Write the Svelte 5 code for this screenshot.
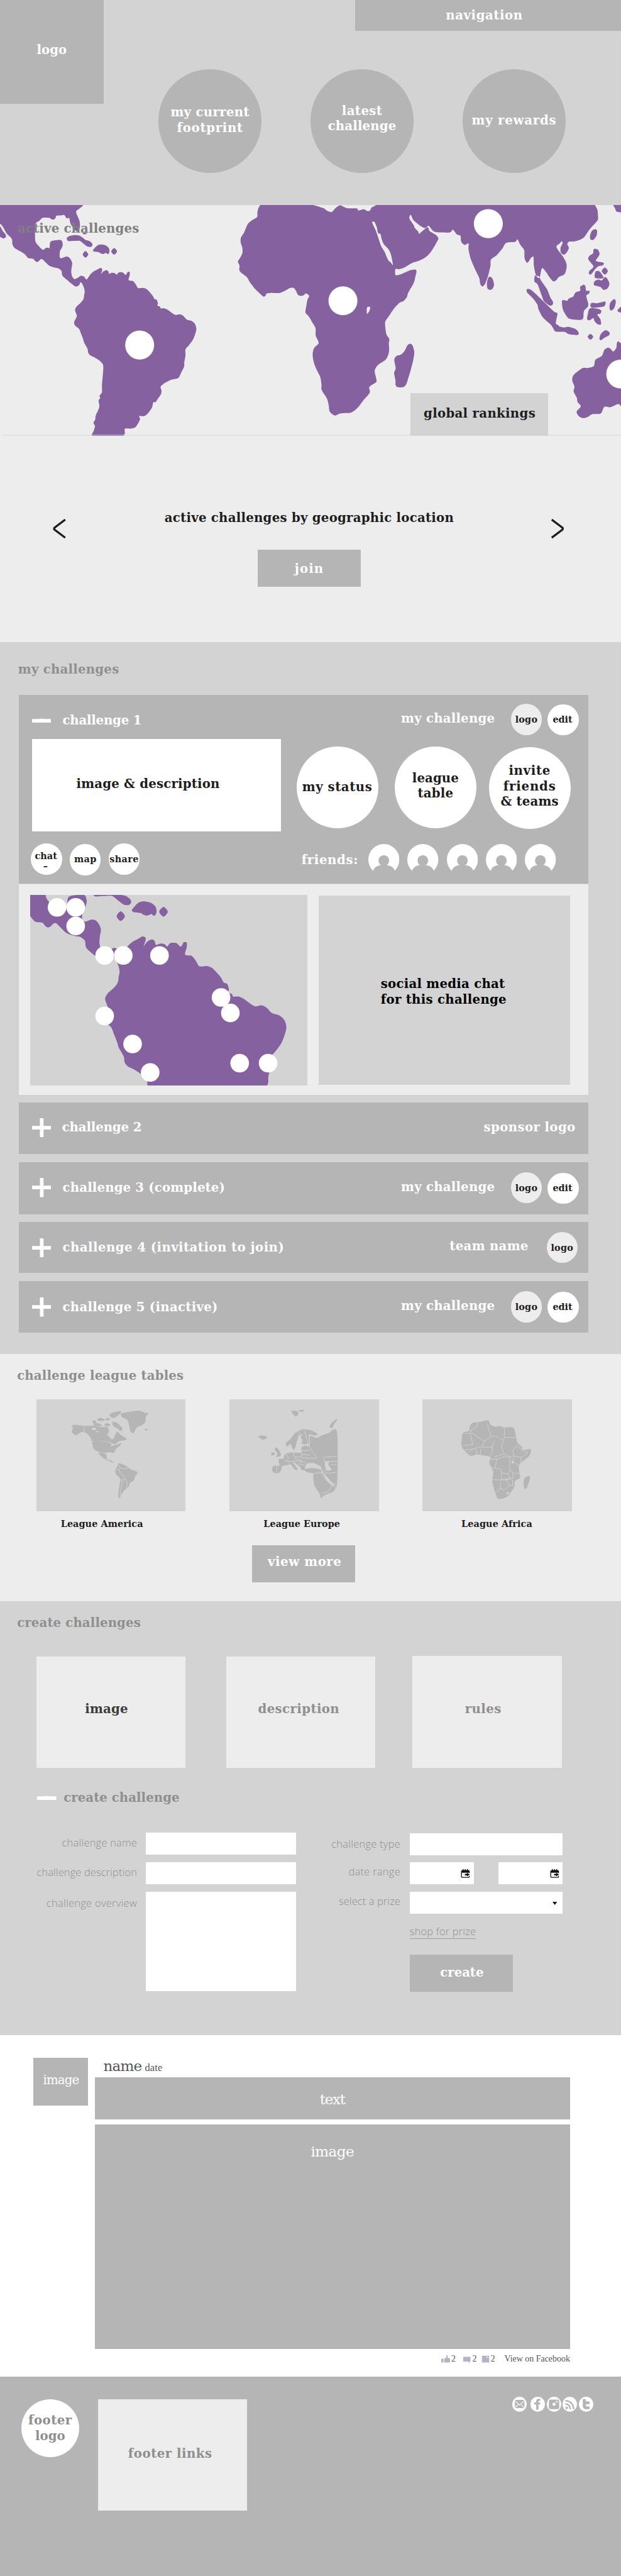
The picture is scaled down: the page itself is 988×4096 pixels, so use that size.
<script>
  const SERIF = '"DejaVu Serif", serif';
  const fonts = {
    title: `bold 24px ${SERIF}`,
    small: `bold 17.5px ${SERIF}`,
    body: `24px ${SERIF}`,
    large: `28px ${SERIF}`,
    form: '300 20px "Open Sans", sans-serif',
    meta: '17px "Liberation Serif", serif',
    date: '20px "Liberation Serif", serif'
  };
  const ctx = document.createElement('canvas').getContext('2d');

  // letter-spacing that sets a line of text to the given measure
  function tracking(text, width, kind) {
    ctx.font = fonts[kind];
    return ((width - ctx.measureText(text).width) / Math.max(1, text.length - 1)).toFixed(3);
  }

  // closed Catmull-Rom outline through "x,y x,y ..." points
  function outline(str) {
    const p = str.trim().split(/\s+/).map((s) => s.split(',').map(Number));
    const n = p.length;
    let d = `M${p[0]}`;
    for (let i = 0; i < n; i++) {
      const a = p[(i + n - 1) % n], b = p[i], c = p[(i + 1) % n], e = p[(i + 2) % n];
      const k = 7;
      d += `C${(b[0] + (c[0] - a[0]) / k).toFixed(1)},${(b[1] + (c[1] - a[1]) / k).toFixed(1)} ${(c[0] - (e[0] - b[0]) / k).toFixed(1)},${(c[1] - (e[1] - b[1]) / k).toFixed(1)} ${c}`;
    }
    return d + 'Z';
  }

  const americas = [
    '-20,-10 425,-10 421,18 402,38 386,52 386,66 394,88 402,112 404,140 401,158 400,172 385,168 368,148 356,125 350,94 342,95 334,92 325,76 310,78 285,80 280,95 270,103 260,100 247,92 216,92 200,108 180,124 177,160 177,200 180,232 195,255 217,278 230,268 242,265 250,268 252,240 258,228 275,223 300,220 312,225 317,245 313,265 303,285 302,322 315,325 330,318 345,319 357,333 365,355 362,380 360,405 364,430 376,447 395,438 408,428 424,433 436,450 446,438 458,418 472,404 490,393 505,383 516,388 515,402 510,420 522,403 538,395 547,402 551,416 565,411 580,413 589,422 600,409 620,409 635,423 645,406 655,407 655,425 649,452 660,457 672,459 685,476 698,499 722,498 740,505 760,528 772,545 780,562 792,568 798,590 795,600 808,607 812,617 830,617 848,626 868,643 887,655 908,651 925,660 943,681 968,690 985,708 992,737 985,770 974,800 955,830 937,855 937,890 931,930 930,955 915,990 902,1020 885,1026 862,1032 835,1048 812,1070 816,1095 813,1115 798,1140 786,1161 775,1161 768,1192 750,1222 730,1241 703,1242 708,1258 697,1285 683,1307 660,1314 631,1315 631,1340 625,1350 613,1360 473,1360 474,1325 480,1300 472,1280 481,1262 483,1240 493,1215 502,1185 498,1150 506,1138 503,1122 515,1103 515,1060 519,1010 522,960 519,940 505,922 480,903 455,888 445,872 442,850 425,815 420,795 408,760 400,737 378,714 375,695 388,663 384,645 379,625 388,605 408,584 422,562 425,540 428,520 424,497 413,470 405,467 400,482 384,491 366,478 345,458 320,434 313,420 311,400 295,385 276,381 250,371 230,350 215,333 206,332 195,344 185,348 175,340 167,330 142,325 122,300 95,282 72,265 62,242 62,225 55,207 35,185 20,155 5,130 -20,110',
    '-10,125 5,150 15,170 28,188 30,203 18,212 5,205 -10,190',
    '338,207 350,198 375,192 400,195 415,205 432,220 450,226 465,240 467,252 458,261 442,259 425,245 403,226 375,226 345,227 338,215',
    '470,280 480,265 495,250 515,247 535,253 550,268 553,288 548,301 542,302 536,296 520,302 508,298 500,292 475,288',
    '432,285 446,304 432,323 418,304',
    '577,268 591,287 577,306 562,287',
    '417,182 427,178 440,182 427,188'
  ].map(outline).join('');

  // the eastern half is charted from its own origin, 1568 units to the right
  const africaWest = '0,-10 -250,-10 -254,18 -264,40 -268,65 -269,87 -293,105 -314,125 -325,150 -336,180 -351,207 -352,235 -344,265 -343,295 -354,322 -366,345 -358,370 -359,395 -348,412 -320,437 -306,465 -283,500 -256,530 -238,548 -228,546 -220,530 -193,527 -156,528 -128,515 -103,499 -84,499 -73,515 -63,538 -48,545 -33,540 -22,530 -6,545 -15,568 -20,600 -25,640 -12,658 0,678 ';
  const east = [
    africaWest + '10,700 26,732 27,775 42,817 20,845 12,875 13,905 20,940 35,980 50,1015 56,1060 57,1090 83,1138 92,1175 97,1213 110,1230 127,1238 145,1228 170,1224 200,1223 222,1210 245,1185 268,1150 300,1105 298,1072 332,1045 333,1025 325,978 342,945 380,915 395,880 398,850 396,820 399,795 385,770 380,740 378,695 395,665 420,622 450,585 470,575 488,550 495,525 522,470 530,435 536,405 530,392 500,398 460,418 431,424 430,390 450,390 475,380 515,353 545,342 580,322 605,295 625,260 640,230 647,212 635,192 602,168 598,153 588,148 570,165 549,185 545,172 527,150 522,135 500,95 508,75 520,105 545,130 573,150 585,148 598,138 610,155 625,172 660,177 705,177 720,161 740,188 758,196 762,230 780,249 799,240 799,275 810,330 830,385 853,440 858,475 868,490 880,480 888,460 900,420 910,370 912,335 940,310 970,270 990,237 1035,231 1046,217 1060,248 1080,280 1082,325 1093,352 1103,345 1112,328 1127,318 1129,370 1140,425 1157,440 1170,384 1190,405 1210,440 1228,461 1243,453 1255,435 1283,420 1294,385 1293,355 1275,315 1243,262 1260,240 1270,228 1274,240 1264,265 1266,295 1282,306 1297,290 1306,266 1298,245 1307,230 1340,228 1380,208 1410,160 1450,108 1453,80 1450,45 1438,18 1438,-10',
    '504,822 516,832 525,870 520,915 508,970 495,1020 485,1055 470,1073 440,1073 430,1060 430,1035 423,990 431,965 424,915 435,893 458,885 478,860 490,832',
    '907,434 920,445 928,480 920,503 907,510 894,500 892,470 898,442',
    '1437,158 1448,165 1446,195 1430,219 1415,218 1413,195 1422,168',
    '1437,271 1453,277 1461,300 1455,318 1443,342 1480,352 1478,367 1455,373 1440,388 1418,420 1407,415 1410,400 1430,374 1405,335 1408,315 1428,298 1430,278',
    '1488,380 1503,401 1488,422 1472,401',
    '1440,405 1455,400 1470,415 1481,440 1460,444 1437,438',
    '1487,436 1500,445 1511,475 1500,503 1480,509 1465,493 1433,482 1436,460 1455,450 1472,455',
    '1382,480 1390,490 1393,514 1410,515 1408,530 1394,545 1404,590 1400,610 1382,632 1378,675 1360,684 1310,678 1290,655 1275,620 1271,575 1280,568 1297,573 1305,560 1328,548 1340,525 1363,515 1363,492',
    '1420,586 1450,587 1488,578 1490,595 1478,608 1425,614 1415,604',
    '1412,618 1455,620 1470,630 1465,648 1450,653 1465,680 1468,710 1450,708 1435,690 1430,673 1410,686 1398,680 1402,650',
    '1535,563 1543,580 1535,615 1520,630 1511,615 1515,585',
    '1580,600 1551,630 1580,642',
    '1095,506 1115,510 1145,540 1185,585 1230,635 1248,645 1245,670 1240,705 1253,715 1258,722 1282,728 1305,724 1340,737 1355,757 1350,771 1305,766 1285,753 1240,752 1228,735 1215,712 1175,670 1152,620 1147,595 1125,560 1095,525',
    '1135,428 1155,432 1165,455 1195,505 1213,555 1226,580 1222,598 1208,600 1180,575 1168,540 1148,478 1132,462',
    '1415,765 1429,782 1415,799 1401,782',
    '1490,744 1510,755 1510,772 1485,788 1468,802 1460,792 1468,765',
    '1533,10 1540,40 1550,57 1600,58 1600,10',
    '1600,830 1580,830 1555,808 1548,822 1546,845 1531,867 1515,850 1503,845 1485,858 1472,893 1440,915 1432,951 1400,963 1375,963 1330,1003 1323,1035 1334,1070 1330,1100 1346,1135 1350,1160 1366,1185 1345,1215 1355,1240 1375,1253 1400,1247 1425,1230 1467,1226 1485,1188 1515,1190 1540,1178 1560,1173 1600,1200'
  ].map(outline).join('');
  const seas = [
    '312,118 324,117 335,145 342,180 354,186 360,215 372,247 395,275 407,305 417,365 405,350 392,335 375,290 357,255 345,215 330,165',
    '20,10 45,28 70,38 85,52 108,59 125,38 150,20 185,36 235,38 243,50 270,43 285,52 299,52 308,34 316,10',
    '286,612 302,609 298,632 286,648'
  ].map(outline).join('');

  const leagues = [
    {
      name: 'League America', width: 159, shift: 35, box: '91 282 378 648',
      land: [
        '188,430 200,432 211,435 225,437 235,434 255,442 270,442 275,470 270,485 275,500 283,514 290,490 295,470 305,490 312,500 319,515 300,525 290,542 283,537 270,525 233,525 228,505 217,478 205,472 192,490 184,482 180,465 184,450 180,437',
        '234,528 270,528 280,540 290,548 305,535 303,548 293,568 286,592 275,588 262,592 247,585 236,570 233,548',
        '248,591 262,595 268,605 270,628 282,640 285,652 272,636 258,620',
        '305,365 325,355 350,348 365,360 374,362 367,385 366,415 355,435 345,445 336,478 328,465 325,430 320,400 308,385',
        '275,375 285,358 305,352 300,370 285,390',
        '235,420 245,420 258,435 240,436',
        '284,412 297,422 308,450 305,466 296,452 285,435',
        '262,430 270,420 278,432 270,438',
        '245,396 255,390 265,402 250,408',
        '232,408 240,404 242,416 234,418',
        '268,392 276,394 274,404 266,402',
        '365,455 374,456 368,463',
        '297,655 305,655 315,665 325,680 330,688 345,700 346,712 340,730 338,750 328,765 325,785 318,800 308,825 302,855 298,845 300,790 303,745 292,715 290,690 295,675'
      ],
      water: ['230,450 238,446 242,456 234,460', '240,468 248,466 246,474', '278,548 286,544 284,554'],
      borders: 'M211 434V480M297 655L303 680L312 684L325 680M290 690L300 688L302 710L310 720L316 748L304 750M303 745L308 752L302 850M316 748L322 770L318 795M303 680L300 690'
    },
    {
      name: 'League Europe', width: 148, shift: 9, box: '580 282 378 648',
      land: [
        '653,495 668,493 676,502 666,516 658,508',
        '737,350 750,350 755,365 748,382 740,365', '755,345 770,345 762,355',
        '852,396 840,415 833,440 840,448 845,425 852,405',
        '765,455 778,458 790,464 803,482 797,492 785,486 780,490 782,525 775,542 762,538 765,520 760,500 765,485 758,490 752,520 745,575 738,560 735,540 725,555 723,535 735,510 745,480',
        '782,500 786,494 800,505 815,490 830,478 852,472 852,775 840,765 820,712 815,700 810,670 797,655 800,630 790,600 780,575 782,530',
        '697,560 705,575 710,600 708,612 697,614 702,598 695,575', '687,592 694,592 693,605 686,606',
        '722,598 740,590 762,590 762,560 775,550 784,570 800,625 800,650 778,652 772,670 770,692 762,690 758,672 745,650 740,648 748,670 752,690 745,688 735,660 722,665 708,668 705,630 716,625',
        '692,668 712,672 707,705 695,710 688,695',
        '772,685 790,680 812,690 810,705 790,710 773,700',
        '793,712 812,705 820,725 825,750 838,780 848,795 840,820 820,838 812,855 808,830 795,780'
      ],
      water: ['822,648 832,640 830,660 838,690 826,694 822,670', '776,662 790,655 806,668 796,678 778,680'],
      borders: 'M758 470L745 580M768 460L772 480L778 530M723 600L730 625L722 640L740 640L760 640L775 650M742 590L744 615L762 618L764 590M762 580L782 578M762 600L784 606M764 620L800 626M744 625L762 636L758 660L770 664M728 640L735 660M783 500L782 560L795 600L800 625M818 618L852 612M818 618L820 645L852 640M835 660L852 664M812 690L828 712L852 705M793 712L812 706L822 745L850 778M812 830L830 818L838 785M700 668V708'
    },
    {
      name: 'League Africa', width: 137, shift: 2, box: '1068 282 378 648',
      land: [
        '1195,418 1215,412 1235,405 1240,430 1253,440 1262,437 1275,445 1298,447 1303,480 1308,530 1320,560 1322,575 1342,572 1338,610 1315,655 1312,685 1315,735 1303,755 1300,790 1292,820 1280,850 1260,858 1252,820 1245,760 1247,700 1237,650 1240,618 1225,608 1205,602 1190,610 1175,580 1167,550 1170,480 1185,465 1188,440',
        '1338,725 1340,740 1332,795 1325,795 1325,745'
      ],
      water: ['1292,645 1299,640 1298,656', '1280,826 1285,819 1287,828 1282,833'],
      borders: 'M1207 414L1206 440L1188 468L1225 525L1242 498L1235 450L1232 420M1275 445V503H1303M1242 498L1252 495L1273 518L1275 503M1175 480H1190L1195 545L1170 550M1225 525L1220 555L1195 570L1185 590M1220 560H1245L1250 520M1273 518L1268 560L1275 600L1290 615L1300 610L1296 580L1308 545M1245 560L1245 590L1238 618M1250 615L1275 600M1205 575V605M1215 572V602M1175 575L1195 570M1308 550L1320 578L1335 590L1320 618L1302 612M1302 612L1296 640L1312 665M1317 618V650M1240 630L1256 628L1252 680L1268 690L1268 745M1252 680H1245M1256 628L1275 615L1290 618L1288 660L1290 690L1284 715L1268 710M1290 690L1298 712L1315 710M1284 715L1290 735L1280 750L1245 748M1280 750L1298 740L1296 715M1265 755V800L1255 822M1265 800L1275 808L1288 780L1280 750M1288 780L1296 785V750M1268 748L1284 742'
    }
  ].map((l) => ({ ...l, land: l.land.map(outline).join(''), water: l.water.map(outline).join('') }));

  const worldPins = [[270, 270.5], [663, 185], [944, 36], [1200, 326.5]];
  const localPins = [[52, 24], [88, 24], [88, 60], [144, 117], [180, 117], [250, 117], [369, 198], [387, 228], [144, 234], [198, 288], [232, 343], [405, 325], [460, 325]];

  const rows = [
    { cls: 'r2', title: 'challenge 2', tw: 154, right: 'sponsor logo', rw: 177, logo: false, edit: false },
    { cls: 'r3', title: 'challenge 3 (complete)', tw: 314, right: 'my challenge', rw: 181, logo: true, edit: true },
    { cls: 'r4', title: 'challenge 4 (invitation to join)', tw: 428, right: 'team name', rw: 152, logo: true, edit: false },
    { cls: 'r5', title: 'challenge 5 (inactive)', tw: 300, right: 'my challenge', rw: 181, logo: true, edit: true }
  ];
</script>

{#snippet t(text, width, kind = 'title')}
  <span class="t {kind}" style="letter-spacing:{tracking(text, width, kind)}px">{text}</span>
{/snippet}

{#snippet minus()}
  <svg class="sign" width="37" height="37" viewBox="0 0 37 37"><path d="M0 15h15v-.6h7v.6h15v7H0z" fill="#fff" /></svg>
{/snippet}

{#snippet plus()}
  <svg class="sign" width="37" height="37" viewBox="0 0 37 37"><path d="M0 15h15.200V0h7v15H37v7H22.200v15h-7V22H0z" fill="#fff" /></svg>
{/snippet}

{#snippet calendar()}
  <svg class="cal" width="18" height="18" viewBox="0 0 18 18">
    <path d="M2 2h14v5H2z" fill="#111" />
    <path d="M1.500 3v12q0 1 1 1h13q1 0 1-1v-2M16.500 3v5" fill="none" stroke="#111" stroke-width="1.600" />
    <path d="M4.500 0v3M8.800 0v3M13 0v3" stroke="#111" stroke-width="1.800" />
    <path d="M8 9h4V7l5.500 3.500-5.500 3.500v-2H8z" fill="#111" />
  </svg>
{/snippet}

<div class="page">
  <header>
    <div class="logo">{@render t('logo', 58)}</div>
    <nav>{@render t('navigation', 148)}</nav>
    <div class="medals">
      <div class="disc a">{@render t('my current', 152)}{@render t('footprint', 127)}</div>
      <div class="disc b">{@render t('latest', 78)}{@render t('challenge', 132)}</div>
      <div class="disc c">{@render t('my rewards', 163)}</div>
    </div>
  </header>

  <section class="active">
    <div class="world">
      <svg width="1200" height="446" viewBox="0 18 3136 1338" preserveAspectRatio="none">
        <path d={americas} fill="#8661a0" />
        <g transform="translate(1568 0)">
          <path d={east} fill="#8661a0" />
          <path d={seas} fill="#ededed" />
        </g>
        <path d="M16 1351.500H3136" stroke="#d3d3d3" stroke-width="3" />
      </svg>
      <svg class="over" width="1200" height="446" viewBox="0 0 1200 446">
        {#each worldPins as [x, y]}<circle cx={x} cy={y} r="28" fill="#fff" />{/each}
      </svg>
      <h2 class="over-title">{@render t('active challenges', 235)}</h2>
      <div class="rankings">{@render t('global rankings', 216)}</div>
    </div>
    <div class="carousel">
      <svg class="chev" width="25" height="38" viewBox="0 0 25 38"><path d="M24 1.500L3.500 17q-2 2 0 4L24 36.500" fill="none" stroke="#1d1d1d" stroke-width="4" /></svg>
      <div class="slide">
        {@render t('active challenges by geographic location', 559)}
        <div class="button join">{@render t('join', 55)}</div>
      </div>
      <svg class="chev" width="25" height="38" viewBox="0 0 25 38"><path d="M1 1.500L21.500 17q2 2 0 4L1 36.500" fill="none" stroke="#1d1d1d" stroke-width="4" /></svg>
    </div>
  </section>

  <section class="mine">
    <h2>{@render t('my challenges', 195)}</h2>
    <div class="card">
      <div class="head r1">
        {@render minus()}
        <div class="caption">{@render t('challenge 1', 153)}</div>
        <div class="right">{@render t('my challenge', 181)}</div>
        <div class="chip pale">{@render t('logo', 43, 'small')}</div>
        <div class="chip edit">{@render t('edit', 38, 'small')}</div>
      </div>
      <div class="mid">
        <div class="descr">{@render t('image & description', 277)}</div>
        <div class="ring s1">{@render t('my status', 135)}</div>
        <div class="ring s2">{@render t('league', 90)}{@render t('table', 69)}</div>
        <div class="ring s3">{@render t('invite', 80)}{@render t('friends', 101)}{@render t('& teams', 112)}</div>
      </div>
      <div class="foot">
        <div class="chip chat">{@render t('chat', 43, 'small')}{@render t('–', 11, 'small')}</div>
        <div class="chip map">{@render t('map', 43, 'small')}</div>
        <div class="chip share">{@render t('share', 56, 'small')}</div>
        <div class="friends">{@render t('friends:', 109)}</div>
        <div class="avatars">
          {#each [1, 2, 3, 4, 5] as n (n)}
            <svg width="60" height="60" viewBox="0 0 60 60">
              <circle cx="30" cy="30" r="30" fill="#fff" />
              <g fill="#b5b5b5"><ellipse cx="30" cy="32" rx="10.300" ry="10.500" /><path d="M7 60L9.500 51Q13 40.500 30 40.500T51 51L54 60V62H7z" /></g>
            </svg>
          {/each}
        </div>
      </div>
    </div>
    <div class="detail">
      <div class="local">
        <svg width="536" height="368" viewBox="125.800 221.600 937.400 741" preserveAspectRatio="none"><path d={americas} fill="#8661a0" /></svg>
        <svg class="over" width="536" height="368" viewBox="0 0 536 368">
          {#each localPins as [x, y]}<circle cx={x} cy={y} r="18" fill="#fff" />{/each}
        </svg>
      </div>
      <div class="social-chat">{@render t('social media chat', 240)}{@render t('for this challenge', 243)}</div>
    </div>
    {#each rows as row (row.cls)}
      <div class="head bar {row.cls}">
        {@render plus()}
        <div class="caption">{@render t(row.title, row.tw)}</div>
        <div class="right">{@render t(row.right, row.rw)}</div>
        {#if row.logo}<div class="chip pale">{@render t('logo', 43, 'small')}</div>{/if}
        {#if row.edit}<div class="chip edit">{@render t('edit', 38, 'small')}</div>{/if}
      </div>
    {/each}
  </section>

  <section class="leagues">
    <h2>{@render t('challenge league tables', 322)}</h2>
    <div class="league-row">
      {#each leagues as l (l.name)}
        <figure>
          <svg width="289" height="216" viewBox={l.box} preserveAspectRatio="none">
            <path d={l.land} fill="#b5b5b5" />
            <path d={l.water} fill="#d3d3d3" />
            <path d={l.borders} fill="none" stroke="#d3d3d3" stroke-width="1.100" vector-effect="non-scaling-stroke" />
          </svg>
          <figcaption style="padding-right:{l.shift}px">{@render t(l.name, l.width, 'small')}</figcaption>
        </figure>
      {/each}
    </div>
    <div class="button more">{@render t('view more', 142)}</div>
  </section>

  <section class="create">
    <h2>{@render t('create challenges', 239)}</h2>
    <div class="steps">
      <div class="step one">{@render t('image', 83)}</div>
      <div class="step two">{@render t('description', 157)}</div>
      <div class="step three">{@render t('rules', 70)}</div>
    </div>
    <div class="sub">{@render minus()}<h3>{@render t('create challenge', 224)}</h3></div>
    <div class="columns">
      <div class="col left">
        <label for="f1" class="l5">{@render t('challenge name', 145, 'form')}</label><div id="f1" class="field"></div>
        <label for="f2" class="l5">{@render t('challenge description', 194, 'form')}</label><div id="f2" class="field"></div>
        <label for="f3" class="l7">{@render t('challenge overview', 175, 'form')}</label><div id="f3" class="field tall"></div>
      </div>
      <div class="col rightcol">
        <label for="f4" class="l6">{@render t('challenge type', 133, 'form')}</label><div id="f4" class="field"></div>
        <label for="f5" class="l3">{@render t('date range', 100, 'form')}</label>
        <div id="f5" class="dates"><div class="field">{@render calendar()}</div><div class="field">{@render calendar()}</div></div>
        <label for="f6" class="l4">{@render t('select a prize', 119, 'form')}</label>
        <div id="f6" class="field select"><svg width="9" height="6" viewBox="0 0 9 6"><path d="M0 0h9L4.500 6z" fill="#0c1533" /></svg></div>
        <div class="shop">{@render t('shop for prize', 128, 'form')}</div>
        <div class="button make">{@render t('create', 84)}</div>
      </div>
    </div>
  </section>

  <section class="post">
    <div class="thumb">{@render t('image', 70, 'body')}</div>
    <div class="entry">
      <div class="who">{@render t('name', 75, 'large')}{@render t('date', 34, 'date')}</div>
      <div class="block text">{@render t('text', 50, 'large')}</div>
      <div class="block picture">{@render t('image', 84, 'large')}</div>
      <div class="stats">
        <svg width="18" height="15" viewBox="0 0 18 15"><path d="M0 6.500h4.500V14H0zM6 7l4-3V0h2.500v5.500H17V14H6z" fill="#b1b5c3" /></svg>
        <span class="t meta n1">2</span>
        <svg width="15" height="15" viewBox="0 0 15 15"><path d="M0 3h14v9h-1.500l-.5 3-3-3H0z" fill="#b1b5c3" /></svg>
        <span class="t meta n2">2</span>
        <svg width="16" height="15" viewBox="0 0 16 15"><path d="M1 1h9v4h5v9H1zM11 1h4v3h-4z" fill="#b1b5c3" /></svg>
        <span class="t meta n3">2</span>
        {@render t('View on Facebook', 127, 'meta')}
      </div>
    </div>
  </section>

  <footer>
    <div class="footer-logo">{@render t('footer', 84)}{@render t('logo', 58)}</div>
    <div class="footer-links">{@render t('footer links', 162)}</div>
    <div class="icons">
      <svg class="first" width="28" height="29" viewBox="0 0 28 29"><ellipse cx="14" cy="14.500" rx="14" ry="14.500" fill="#fff" /><rect x="5" y="6" width="18.500" height="16" rx="2" fill="#b5b5b5" /><path d="M5.500 8l8.700 8L23 8M5.500 21l5.500-6M23 21l-5.500-6" fill="none" stroke="#fff" stroke-width="1.400" /></svg>
      <svg width="28" height="29" viewBox="0 0 28 29"><ellipse cx="14" cy="14.500" rx="14" ry="14.500" fill="#fff" /><path d="M11 25V15H7v-4h4V9q0-5 5.500-5H19v4h-2q-1.500 0-1.500 1.500V11H19l-.5 4h-3v10z" fill="#b5b5b5" /></svg>
      <svg width="28" height="29" viewBox="0 0 28 29"><ellipse cx="14" cy="14.500" rx="14" ry="14.500" fill="#fff" /><rect x="4" y="5.500" width="20" height="18.500" rx="3.500" fill="#b5b5b5" /><circle cx="14" cy="14.500" r="3" fill="#fff" /><rect x="18" y="8" width="3" height="3" fill="#fff" /></svg>
      <svg width="28" height="29" viewBox="0 0 28 29"><ellipse cx="14" cy="14.500" rx="14" ry="14.500" fill="#fff" /><circle cx="8" cy="21.500" r="2.500" fill="#b5b5b5" /><path d="M5.500 13.500q9 1 9.500 10.500M5.500 7.500q15 1 16 16.500" fill="none" stroke="#b5b5b5" stroke-width="3" /></svg>
      <svg width="28" height="29" viewBox="0 0 28 29"><ellipse cx="14" cy="14.500" rx="14" ry="14.500" fill="#fff" /><path d="M8 5h5v4.500h7V14h-7v2.500q0 2.500 2.500 2.500H20v4.500h-6q-6 0-6-6z" fill="#b5b5b5" stroke="#b5b5b5" stroke-linejoin="round" /></svg>
    </div>
  </footer>
</div>

<style>
  :global(body) { margin: 0; background: #fff; }
  .page { width: 1200.5px; height: 4977px; zoom: 0.823; overflow: hidden; color: #1d1d1d; }
  .page, .page * { box-sizing: border-box; }
  svg { display: block; flex: none; }
  h2, h3, figure { margin: 0; }
  h2, h3 { color: #8f8f8f; height: 30px; }

  .t { display: block; white-space: nowrap; font-family: "DejaVu Serif", serif; font-weight: bold; font-size: 24px; line-height: 30px; }
  .t.small { font-size: 17.5px; line-height: 22px; }
  .t.body { font-weight: normal; }
  .t.large { font-weight: normal; font-size: 28px; line-height: 36px; }
  .t.form { font: 300 20px/28px "Open Sans", sans-serif; }
  .t.meta { font: 17px/20px "Liberation Serif", serif; }
  .t.date { font: 20px/24px "Liberation Serif", serif; }

  header { height: 396px; background: #d3d3d3; display: grid; grid-template: 60px 1fr / 306px 380px 1fr; color: #fff; }
  .logo { grid-row: 1 / 3; width: 200px; height: 200px; background: #b5b5b5; display: flex; justify-content: center; padding-top: 82px; }
  nav { grid-column: 3; background: #b5b5b5; display: flex; justify-content: center; padding: 14px 14px 0 0; }
  .medals { grid-column: 2 / 4; display: flex; gap: 94px; padding-top: 74px; }
  .disc { width: 200px; height: 200px; border-radius: 50%; background: #b5b5b5; display: flex; flex-direction: column; align-items: center; }
  .disc.a { padding-top: 68px; }
  .disc.b { padding-top: 65px; }
  .disc.c { padding-top: 84px; }

  .active { height: 845px; background: #ededed; }
  .world { position: relative; height: 446px; overflow: hidden; }
  .over { position: absolute; left: 0; top: 0; }
  .over-title { position: absolute; left: 34px; top: 31px; color: #808080; }
  .rankings { position: absolute; left: 794px; top: 364px; width: 265px; height: 82px; background: #d3d3d3; padding: 24px 0 0 25px; }
  .carousel { height: 399px; display: flex; padding: 0 110px 0 102px; }
  .chev { margin-top: 161px; }
  .slide { flex: 1; display: flex; flex-direction: column; align-items: center; padding: 143px 0 0 3px; }
  .button { width: 200px; height: 72px; background: #b5b5b5; color: #fff; display: flex; justify-content: center; }
  .join { margin-top: 47px; padding-top: 22px; }

  .mine { height: 1375px; background: #d3d3d3; padding: 37px 63px 0 37px; }
  .mine h2 { margin: 0 0 35px -2px; }
  .card { height: 364px; background: #b5b5b5; color: #fff; }
  .head { display: flex; align-items: flex-start; padding-left: 25px; color: #fff; }
  .head .sign { margin-top: 31px; }
  .caption { margin: 34px auto 0 22px; }
  .right { margin: 33px 31px 0 0; }
  .chip { width: 60px; height: 60px; border-radius: 50%; background: #fff; color: #1d1d1d; display: flex; flex-direction: column; align-items: center; flex: none; }
  .chip.pale { background: #ededed; margin: 20px 11px 0 0; padding-top: 19px; }
  .chip.edit { margin: 21px 19px 0 0; padding: 18px 2px 0 0; }
  .r1 { height: 85px; }
  .r1 .right { margin-top: 30px; }
  .r1 .chip.pale { margin-top: 17px; }
  .r1 .chip.edit { margin-top: 18px; }
  .bar { height: 100px; margin-top: 15px; background: #b5b5b5; }
  .r2 .sign { margin-top: 30px; }
  .r2 .caption { margin: 33px auto 0 21px; }
  .r2 .right { margin-right: 25px; }
  .r3 { height: 101px; }
  .r4 { height: 99px; }
  .r4 .right { margin: 32px 35px 0 0; }
  .r4 .chip.pale { margin: 19px 21px 0 0; padding-top: 20px; }
  .r5 .sign { margin-top: 32px; }
  .r5 .caption { margin-top: 35px; }

  .mid { display: flex; padding-left: 25px; color: #1d1d1d; }
  .descr { width: 481.5px; height: 178px; background: #fff; display: flex; justify-content: center; padding: 71px 33px 0 0; margin-right: 29.5px; }
  .ring { width: 158px; height: 158px; border-radius: 50%; background: #fff; display: flex; flex-direction: column; align-items: center; margin-top: 14px; }
  .s1 { padding-top: 63px; margin-right: 32px; }
  .s2 { padding-top: 46px; margin-right: 24px; }
  .s3 { padding-top: 31px; margin-top: 15px; }
  .foot { display: flex; align-items: flex-start; padding: 24px 0 0 23px; }
  .foot .chip { margin-right: 15px; }
  .chat { padding: 14px 2px 0 0; }
  .chat .t { line-height: 19px; }
  .chip.map { margin-top: 1px; padding-top: 18px; }
  .share { padding-top: 19px; }
  .friends { width: 109px; margin: 16px 20px 0 298px; }
  .avatars { display: flex; gap: 15.75px; margin-top: 1px; }

  .detail { margin-top: 1px; height: 407px; background: #ededed; display: flex; gap: 22px; padding: 21px 0 0 21px; }
  .local { position: relative; width: 536px; height: 368px; background: #d3d3d3; }
  .social-chat { width: 485.5px; height: 366px; margin-top: 1px; background: #d3d3d3; color: #000; padding: 156px 0 0 120px; }

  .leagues { height: 478px; background: #ededed; padding-top: 27px; }
  .leagues h2, .create h2 { padding-left: 33px; }
  .league-row { display: flex; gap: 84.5px; margin: 31px 0 0 70px; }
  figure svg { background: #d3d3d3; }
  figcaption { display: flex; justify-content: center; padding-top: 13px; }
  .more { margin: 30px 0 0 487px; padding: 18px 0 0 4px; }

  .create { height: 838px; background: #d3d3d3; padding-top: 26px; }
  .steps { display: flex; margin: 50px 0 0 70px; color: #8f8f8f; }
  .step { width: 289px; height: 216px; background: #ededed; display: flex; justify-content: center; padding-top: 87px; }
  .one { color: #3c3c3c; padding-right: 17px; margin-right: 78px; }
  .two { padding-right: 8px; margin-right: 71px; }
  .three { padding: 88px 15px 0 0; margin-top: -1px; }
  .sub { display: flex; gap: 14px; margin: 42px 0 0 72px; height: 30px; }
  .sub .sign { margin-top: -2px; }
  .columns { display: flex; margin-top: 53px; }
  .col { display: grid; align-content: start; row-gap: 15px; color: #8f8f8f; }
  .left { grid-template-columns: 265px 290.4px; column-gap: 16.6px; }
  .rightcol { grid-template-columns: 202px 296px; column-gap: 18px; margin-top: 1px; row-gap: 14.5px; }
  label { display: flex; justify-content: flex-end; }
  .l3 { padding-top: 3px; }
  .l4 { padding-top: 4px; }
  .l5 { padding-top: 5px; }
  .l6 { padding-top: 6px; }
  .l7 { padding-top: 7px; }
  .field { height: 42px; background: #fff; }
  .tall { height: 192px; }
  .dates { display: flex; justify-content: space-between; }
  .dates .field { width: 124px; display: flex; justify-content: flex-end; padding: 13px 7px 0 0; }
  .select { display: flex; justify-content: flex-end; padding: 20px 11px 0 0; }
  .shop, .make { grid-column: 2; }
  .shop { margin-top: 6px; width: 128px; border-bottom: 2px solid #a0a0a0; height: 29px; }
  .make { margin-top: 15px; padding: 20px 0 0 2px; }

  .post { height: 660px; background: #fff; display: flex; padding-left: 65px; color: #fff; }
  .thumb { width: 105.5px; height: 92px; margin: 44px 12.5px 0 0; background: #b5b5b5; display: flex; justify-content: center; padding-top: 29px; }
  .entry { width: 919px; padding-top: 42px; }
  .who { display: flex; align-items: baseline; gap: 6px; padding-left: 17px; height: 36px; color: #555; }
  .block { background: #b5b5b5; display: flex; justify-content: center; }
  .text { height: 82px; margin-top: 3px; padding-top: 26px; }
  .picture { height: 434px; margin-top: 9px; padding-top: 36px; }
  .stats { display: flex; justify-content: flex-end; padding-top: 10px; color: #555; }
  .stats svg { margin-top: 2px; }
  .n1 { margin: 0 14px 0 2px; }
  .n2 { margin: 0 9px 0 3px; }
  .n3 { margin: 0 18px 0 2px; }

  footer { height: 385px; background: #b5b5b5; display: flex; align-items: flex-start; padding: 43px 54px 0 41px; color: #8f8f8f; }
  .footer-logo { width: 112px; height: 112px; border-radius: 50%; background: #fff; display: flex; flex-direction: column; align-items: center; padding-top: 26px; }
  .footer-links { width: 289px; height: 216px; margin-left: 36px; background: #ededed; display: flex; justify-content: center; padding: 91px 9px 0 0; }
  .icons { display: flex; gap: 3px; margin: -4px 0 0 auto; }
  .first { margin-right: 4px; }
</style>
